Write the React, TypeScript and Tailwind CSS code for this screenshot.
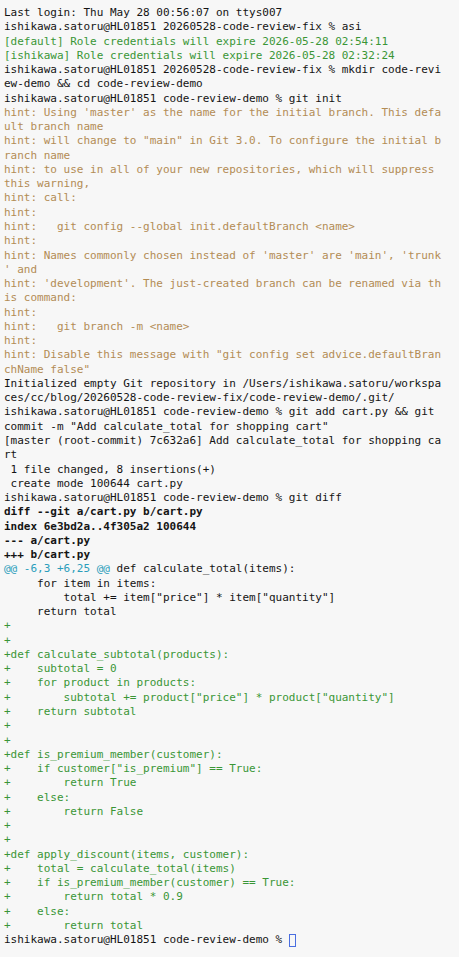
import React from "react";

type Seg = { t: string; c?: string; b?: boolean };
type Line = Seg[];

const N = "#141414";
const G = "#3a9636";
const H = "#b38c55";
const C = "#2a9dbb";

const n = (t: string): Line => [{ t, c: N }];
const g = (t: string): Line => [{ t, c: G }];
const h = (t: string): Line => [{ t, c: H }];
const b = (t: string): Line => [{ t, c: N, b: true }];

const lines: Line[] = [
  n("Last login: Thu May 28 00:56:07 on ttys007"),
  n("ishikawa.satoru@HL01851 20260528-code-review-fix % asi"),
  g("[default] Role credentials will expire 2026-05-28 02:54:11"),
  g("[ishikawa] Role credentials will expire 2026-05-28 02:32:24"),
  n("ishikawa.satoru@HL01851 20260528-code-review-fix % mkdir code-revi"),
  n("ew-demo && cd code-review-demo"),
  n("ishikawa.satoru@HL01851 code-review-demo % git init"),
  h("hint: Using 'master' as the name for the initial branch. This defa"),
  h("ult branch name"),
  h('hint: will change to "main" in Git 3.0. To configure the initial b'),
  h("ranch name"),
  h("hint: to use in all of your new repositories, which will suppress "),
  h("this warning,"),
  h("hint: call:"),
  h("hint:"),
  h("hint:   git config --global init.defaultBranch <name>"),
  h("hint:"),
  h("hint: Names commonly chosen instead of 'master' are 'main', 'trunk"),
  h("' and"),
  h("hint: 'development'. The just-created branch can be renamed via th"),
  h("is command:"),
  h("hint:"),
  h("hint:   git branch -m <name>"),
  h("hint:"),
  h('hint: Disable this message with "git config set advice.defaultBran'),
  h('chName false"'),
  n("Initialized empty Git repository in /Users/ishikawa.satoru/workspa"),
  n("ces/cc/blog/20260528-code-review-fix/code-review-demo/.git/"),
  n("ishikawa.satoru@HL01851 code-review-demo % git add cart.py && git "),
  n('commit -m "Add calculate_total for shopping cart"'),
  n("[master (root-commit) 7c632a6] Add calculate_total for shopping ca"),
  n("rt"),
  n(" 1 file changed, 8 insertions(+)"),
  n(" create mode 100644 cart.py"),
  n("ishikawa.satoru@HL01851 code-review-demo % git diff"),
  b("diff --git a/cart.py b/cart.py"),
  b("index 6e3bd2a..4f305a2 100644"),
  b("--- a/cart.py"),
  b("+++ b/cart.py"),
  [
    { t: "@@ -6,3 +6,25 @@", c: C },
    { t: " def calculate_total(items):", c: N },
  ],
  n("     for item in items:"),
  n('         total += item["price"] * item["quantity"]'),
  n("     return total"),
  g("+"),
  g("+"),
  g("+def calculate_subtotal(products):"),
  g("+    subtotal = 0"),
  g("+    for product in products:"),
  g('+        subtotal += product["price"] * product["quantity"]'),
  g("+    return subtotal"),
  g("+"),
  g("+"),
  g("+def is_premium_member(customer):"),
  g('+    if customer["is_premium"] == True:'),
  g("+        return True"),
  g("+    else:"),
  g("+        return False"),
  g("+"),
  g("+"),
  g("+def apply_discount(items, customer):"),
  g("+    total = calculate_total(items)"),
  g("+    if is_premium_member(customer) == True:"),
  g("+        return total * 0.9"),
  g("+    else:"),
  g("+        return total"),
];

export default function App() {
  return (
    <div
      className="w-[459px] h-[957px] bg-[#f7f7f7] overflow-hidden pt-[6px] pl-[4px] text-[11px] leading-[14.27px]"
      style={{ fontFamily: '"DejaVu Sans Mono", "Liberation Mono", monospace' }}
    >
      {lines.map((line, i) => (
        <div key={i} className="whitespace-pre h-[14.27px]">
          {line.map((s, j) => (
            <span key={j} className={s.b ? "font-bold" : ""} style={{ color: s.c }}>
              {s.t}
            </span>
          ))}
        </div>
      ))}
      <div className="whitespace-pre h-[14.27px] flex items-center text-[#141414]">
        <span>ishikawa.satoru@HL01851 code-review-demo % </span>
        <span className="inline-block w-[7px] h-[13px] border border-[#4a6ee0]" />
      </div>
    </div>
  );
}
